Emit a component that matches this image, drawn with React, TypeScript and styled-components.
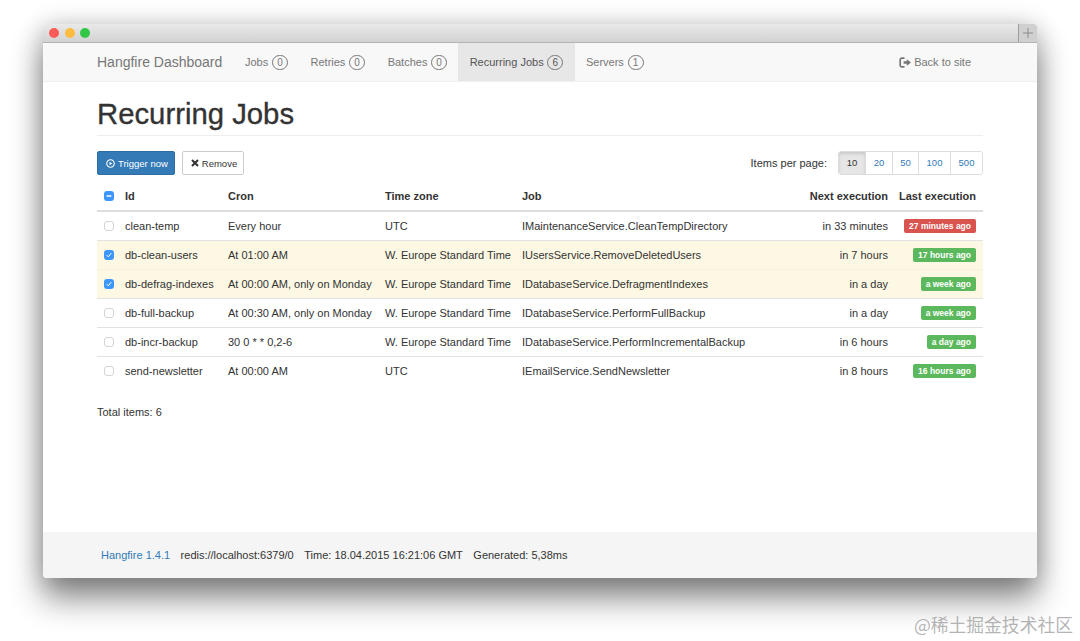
import styled, { createGlobalStyle } from 'styled-components';

const GlobalStyle = createGlobalStyle`
  html, body {
    margin: 0;
    padding: 0;
    background: #fff;
    font-family: "Liberation Sans", Arial, sans-serif;
    font-size: 11px;
    color: #333;
  }
  * { box-sizing: border-box; }
`;

const Page = styled.div`
  position: relative;
  width: 1080px;
  height: 641px;
  overflow: hidden;
  padding: 24px 43px 0;
`;

const Window = styled.div`
  width: 994px;
  height: 554px;
  display: flex;
  flex-direction: column;
  background: #fff;
  border-radius: 4px;
  overflow: hidden;
  box-shadow: 0 20px 32px rgba(0, 0, 0, 0.48), 0 0 24px rgba(0, 0, 0, 0.18);
`;

const TitleBar = styled.div`
  height: 19px;
  flex: none;
  display: flex;
  align-items: center;
  justify-content: space-between;
  padding-left: 6px;
  background: linear-gradient(#e9e9e9, #d2d2d2);
  border-bottom: 1px solid #b4b4b4;
`;

const Lights = styled.div`
  display: flex;
  gap: 5.5px;
`;

const Light = styled.span<{ $c: string }>`
  width: 10px;
  height: 10px;
  border-radius: 50%;
  background: ${p => p.$c};
`;

const PlusTab = styled.div`
  width: 19px;
  height: 18px;
  display: flex;
  align-items: center;
  justify-content: center;
  border-left: 1px solid #9c9c9c;
  background: #d0d0d0;
`;

const Nav = styled.nav`
  height: 39px;
  flex: none;
  display: flex;
  padding: 0 54px;
  background: #f8f8f8;
  border-bottom: 1px solid #f0f0f0;
  color: #777;
`;

const Brand = styled.div`
  font-size: 14px;
  line-height: 38px;
  margin-right: 11.7px;
  width: 125px;
  white-space: nowrap;
`;

const NavItem = styled.div<{ $active?: boolean }>`
  height: 38px;
  display: flex;
  align-items: center;
  gap: 3.7px;
  padding: 0 11.3px;
  background: ${p => (p.$active ? '#e7e7e7' : 'transparent')};
  color: ${p => (p.$active ? '#555' : '#777')};
`;

const Count = styled.span`
  min-width: 16px;
  height: 15px;
  padding: 0 4px;
  border: 1px solid #777;
  border-radius: 8px;
  font-size: 10px;
  line-height: 13px;
  text-align: center;
`;

const BackLink = styled.div`
  margin-left: auto;
  margin-right: 12px;
  display: flex;
  align-items: center;
  gap: 3px;
`;

const Main = styled.main`
  flex: 1;
  padding: 0 54px;
`;

const Heading = styled.h1`
  margin: 16px 0 0;
  padding-bottom: 4px;
  height: 38px;
  font-size: 29.3px;
  font-weight: 400;
  line-height: 31px;
  color: #333;
  -webkit-text-stroke: 0.35px #333;
  border-bottom: 1px solid #eee;
`;

const Toolbar = styled.div`
  margin-top: 15px;
  display: flex;
  align-items: center;
  gap: 7px;
`;

const Button = styled.button<{ $primary?: boolean }>`
  height: 24px;
  padding: 0 6px 0 8px;
  display: flex;
  align-items: center;
  gap: 3px;
  font: 9.5px "Liberation Sans", Arial, sans-serif;
  color: ${p => (p.$primary ? '#fff' : '#333')};
  background: ${p => (p.$primary ? '#337ab7' : '#fff')};
  border: 1px solid ${p => (p.$primary ? '#2e6da4' : '#ccc')};
  border-radius: 2px;
`;

const PerPage = styled.div`
  margin-left: auto;
  display: flex;
  align-items: center;
  gap: 11px;
`;

const PageGroup = styled.div`
  display: flex;
  height: 24px;
  border: 1px solid #ddd;
  border-radius: 3px;
  overflow: hidden;
`;

const PageBtn = styled.span<{ $active?: boolean; $w: number }>`
  width: ${p => p.$w}px;
  font-size: 9.5px;
  line-height: 22px;
  text-align: center;
  color: ${p => (p.$active ? '#333' : '#337ab7')};
  background: ${p => (p.$active ? '#e6e6e6' : '#fff')};
  box-shadow: ${p => (p.$active ? 'inset 0 2px 3px rgba(0,0,0,.125)' : 'none')};
  & + & {
    border-left: 1px solid #ddd;
  }
`;

const Table = styled.table`
  margin-top: 6px;
  width: 886px;
  table-layout: fixed;
  border-collapse: collapse;
  font-size: 11px;
`;

const Col = styled.col<{ $w: number }>`
  width: ${p => p.$w}px;
`;

const Th = styled.th<{ $right?: boolean }>`
  height: 30px;
  padding: ${p => (p.$right ? '0 7px 0 0' : '0 7px')};
  font-weight: 700;
  white-space: nowrap;
  text-align: ${p => (p.$right ? 'right' : 'left')};
  border-bottom: 2px solid #ddd;
`;

const Td = styled.td<{ $right?: boolean }>`
  height: 29px;
  padding: 0 7px;
  white-space: nowrap;
  text-align: ${p => (p.$right ? 'right' : 'left')};
  border-bottom: 1px solid #e2e2e2;
`;

const Row = styled.tr<{ $selected?: boolean; $soft?: boolean }>`
  background: ${p => (p.$selected ? '#fcf8e3' : '#fff')};
  ${Td} {
    border-bottom-color: ${p => (p.$soft ? '#f7f1d9' : '#e2e2e2')};
  }
  &:last-child ${Td} {
    border-bottom: 0;
  }
`;

const CheckBox = styled.span<{ $on?: boolean }>`
  display: flex;
  align-items: center;
  justify-content: center;
  width: 10px;
  height: 10px;
  margin-top: 1px;
  border-radius: 3px;
  background: ${p => (p.$on ? '#3d97fb' : '#fff')};
  border: ${p => (p.$on ? '0' : '1px solid #d4d4d4')};
`;

const Label = styled.span<{ $danger?: boolean }>`
  display: inline-block;
  padding: 0 5px;
  height: 14px;
  font-size: 8.5px;
  font-weight: 700;
  line-height: 14px;
  vertical-align: middle;
  color: #fff;
  border-radius: 2px;
  background: ${p => (p.$danger ? '#d9534f' : '#5cb85c')};
`;

const Total = styled.div`
  margin-top: 21px;
`;

const Footer = styled.footer`
  height: 46px;
  flex: none;
  display: flex;
  align-items: center;
  gap: 10.5px;
  padding: 0 58px;
  background: #f5f5f5;
  color: #333;
`;

const FooterLink = styled.span`
  color: #337ab7;
`;

const Watermark = styled.div`
  position: absolute;
  right: 7px;
  bottom: 4px;
  font-family: "Noto Sans CJK SC", sans-serif;
  font-size: 17.8px;
  color: rgba(130, 130, 130, 0.6);
  white-space: nowrap;
`;

const PlusIcon = () => (
  <svg width="10" height="10" viewBox="0 0 10 10">
    <path d="M5 0v10M0 5h10" stroke="#8c8c8c" strokeWidth="1" />
  </svg>
);

const PlayIcon = () => (
  <svg width="9" height="9" viewBox="0 0 10 10" fill="none">
    <circle cx="5" cy="5" r="4.2" stroke="#fff" strokeWidth="1.2" />
    <path d="M3.9 3v4L7 5z" fill="#fff" />
  </svg>
);

const CrossIcon = () => (
  <svg width="8" height="8" viewBox="0 0 8 8">
    <path d="M1 1l6 6M7 1L1 7" stroke="#333" strokeWidth="2.1" />
  </svg>
);

const LogOutIcon = () => (
  <svg width="12" height="11" viewBox="0 0 12 11" fill="none">
    <path d="M5.5 1.2H2.8A1.6 1.6 0 0 0 1.2 2.8v5.4a1.6 1.6 0 0 0 1.6 1.6h2.7" stroke="#777" strokeWidth="1.7" />
    <path d="M4.6 4.2h3.2V2.2L12 5.5 7.8 8.8v-2H4.6z" fill="#777" />
  </svg>
);

const MinusMark = () => (
  <svg width="10" height="10" viewBox="0 0 10 10">
    <path d="M2.6 5h4.8" stroke="#fff" strokeWidth="1.5" />
  </svg>
);

const TickMark = () => (
  <svg width="10" height="10" viewBox="0 0 10 10" fill="none">
    <path d="M2.7 5.1l1.6 1.7 3-3.7" stroke="#fff" strokeWidth="1" />
  </svg>
);

const jobs = [
  { id: 'clean-temp', cron: 'Every hour', tz: 'UTC', job: 'IMaintenanceService.CleanTempDirectory', next: 'in 33 minutes', last: '27 minutes ago', danger: true },
  { id: 'db-clean-users', cron: 'At 01:00 AM', tz: 'W. Europe Standard Time', job: 'IUsersService.RemoveDeletedUsers', next: 'in 7 hours', last: '17 hours ago', selected: true },
  { id: 'db-defrag-indexes', cron: 'At 00:00 AM, only on Monday', tz: 'W. Europe Standard Time', job: 'IDatabaseService.DefragmentIndexes', next: 'in a day', last: 'a week ago', selected: true },
  { id: 'db-full-backup', cron: 'At 00:30 AM, only on Monday', tz: 'W. Europe Standard Time', job: 'IDatabaseService.PerformFullBackup', next: 'in a day', last: 'a week ago' },
  { id: 'db-incr-backup', cron: '30 0 * * 0,2-6', tz: 'W. Europe Standard Time', job: 'IDatabaseService.PerformIncrementalBackup', next: 'in 6 hours', last: 'a day ago' },
  { id: 'send-newsletter', cron: 'At 00:00 AM', tz: 'UTC', job: 'IEmailService.SendNewsletter', next: 'in 8 hours', last: '16 hours ago' },
];

const navItems = [
  { name: 'Jobs', count: 0 },
  { name: 'Retries', count: 0 },
  { name: 'Batches', count: 0 },
  { name: 'Recurring Jobs', count: 6, active: true },
  { name: 'Servers', count: 1 },
];

const pageSizes = [
  { n: 10, w: 26, active: true },
  { n: 20, w: 27 },
  { n: 50, w: 26 },
  { n: 100, w: 32 },
  { n: 500, w: 32 },
];

export default function App() {
  return (
    <Page>
      <GlobalStyle />
      <Window>
        <TitleBar>
          <Lights>
            <Light $c="#fc5b57" />
            <Light $c="#fdbc40" />
            <Light $c="#33c748" />
          </Lights>
          <PlusTab>
            <PlusIcon />
          </PlusTab>
        </TitleBar>
        <Nav>
          <Brand>Hangfire Dashboard</Brand>
          {navItems.map(item => (
            <NavItem key={item.name} $active={item.active}>
              {item.name} <Count>{item.count}</Count>
            </NavItem>
          ))}
          <BackLink>
            <LogOutIcon /> Back to site
          </BackLink>
        </Nav>
        <Main>
          <Heading>Recurring Jobs</Heading>
          <Toolbar>
            <Button $primary>
              <PlayIcon /> Trigger now
            </Button>
            <Button>
              <CrossIcon /> Remove
            </Button>
            <PerPage>
              Items per page:
              <PageGroup>
                {pageSizes.map(p => (
                  <PageBtn key={p.n} $w={p.w} $active={p.active}>{p.n}</PageBtn>
                ))}
              </PageGroup>
            </PerPage>
          </Toolbar>
          <Table>
            <colgroup>
              <Col $w={21} />
              <Col $w={103} />
              <Col $w={157} />
              <Col $w={137} />
              <Col $w={280} />
              <Col $w={100} />
              <Col $w={88} />
            </colgroup>
            <thead>
              <tr>
                <Th>
                  <CheckBox $on>
                    <MinusMark />
                  </CheckBox>
                </Th>
                <Th>Id</Th>
                <Th>Cron</Th>
                <Th>Time zone</Th>
                <Th>Job</Th>
                <Th $right>Next execution</Th>
                <Th $right>Last execution</Th>
              </tr>
            </thead>
            <tbody>
              {jobs.map((j, i) => (
                <Row key={j.id} $selected={j.selected} $soft={j.selected && jobs[i + 1]?.selected}>
                  <Td>
                    <CheckBox $on={j.selected}>{j.selected && <TickMark />}</CheckBox>
                  </Td>
                  <Td>{j.id}</Td>
                  <Td>{j.cron}</Td>
                  <Td>{j.tz}</Td>
                  <Td>{j.job}</Td>
                  <Td $right>{j.next}</Td>
                  <Td $right>
                    <Label $danger={j.danger}>{j.last}</Label>
                  </Td>
                </Row>
              ))}
            </tbody>
          </Table>
          <Total>Total items: 6</Total>
        </Main>
        <Footer>
          <FooterLink>Hangfire 1.4.1</FooterLink>
          <span>redis://localhost:6379/0</span>
          <span>Time: 18.04.2015 16:21:06 GMT</span>
          <span>Generated: 5,38ms</span>
        </Footer>
      </Window>
      <Watermark>@稀土掘金技术社区</Watermark>
    </Page>
  );
}
